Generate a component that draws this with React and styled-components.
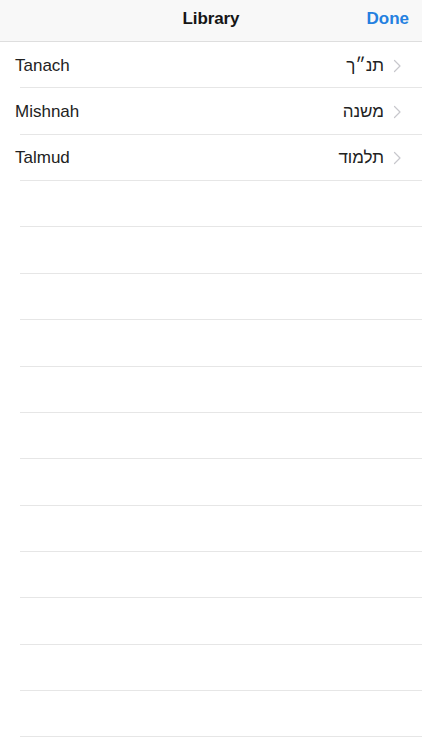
import React from "react";
import styled, { createGlobalStyle } from "styled-components";

const GlobalStyle = createGlobalStyle`
  html, body {
    margin: 0;
    padding: 0;
    background: #fff;
  }
  body {
    font-family: "Liberation Sans", "DejaVu Sans", Arial, sans-serif;
    -webkit-font-smoothing: antialiased;
  }
`;

const Screen = styled.div`
  width: 422px;
  height: 750px;
  overflow: hidden;
  background: #fff;
`;

const NavBar = styled.header`
  box-sizing: border-box;
  height: 42px;
  display: grid;
  grid-template-columns: 1fr auto 1fr;
  align-items: center;
  background: #f8f8f8;
  border-bottom: 1px solid #dedede;
  padding: 0 13px 3px;
`;

const Title = styled.h1`
  grid-column: 2;
  margin: 0;
  font-size: 17px;
  font-weight: 700;
  color: #151515;
  letter-spacing: -0.1px;
`;

const DoneButton = styled.button`
  grid-column: 3;
  justify-self: end;
  border: 0;
  background: none;
  padding: 0;
  font: inherit;
  font-size: 17px;
  font-weight: 700;
  color: #2480e0;
`;

const List = styled.ul`
  list-style: none;
  margin: 0;
  padding: 0;
`;

const Row = styled.li`
  height: 46.36px;
  box-sizing: border-box;
  display: flex;
  align-items: center;
  padding: 1px 20px 0 15px;
  background-image: linear-gradient(#e6e6e6, #e6e6e6);
  background-repeat: no-repeat;
  background-position: 20px 100%;
  background-size: calc(100% - 20px) 1px;
`;

const Label = styled.span`
  flex: 1;
  font-size: 17px;
  color: #222;
`;

const Hebrew = styled.span`
  direction: rtl;
  font-size: 17px;
  color: #222;
  margin-right: 9px;
`;

const Chevron = () => (
  <svg width="9" height="14" viewBox="0 0 9 14" fill="none">
    <polyline
      points="1.5,1.5 7,7 1.5,12.5"
      stroke="#c7c7cc"
      strokeWidth="1.2"
      strokeLinecap="round"
      strokeLinejoin="round"
    />
  </svg>
);

const books = [
  { name: "Tanach", hebrew: "תנ״ך" },
  { name: "Mishnah", hebrew: "משנה" },
  { name: "Talmud", hebrew: "תלמוד" },
];

const EMPTY_ROWS = 12;

export default function App() {
  return (
    <Screen>
      <GlobalStyle />
      <NavBar>
        <Title>Library</Title>
        <DoneButton>Done</DoneButton>
      </NavBar>
      <List>
        {books.map((b) => (
          <Row key={b.name}>
            <Label>{b.name}</Label>
            <Hebrew>{b.hebrew}</Hebrew>
            <Chevron />
          </Row>
        ))}
        {Array.from({ length: EMPTY_ROWS }).map((_, i) => (
          <Row key={"empty" + i} />
        ))}
      </List>
    </Screen>
  );
}
